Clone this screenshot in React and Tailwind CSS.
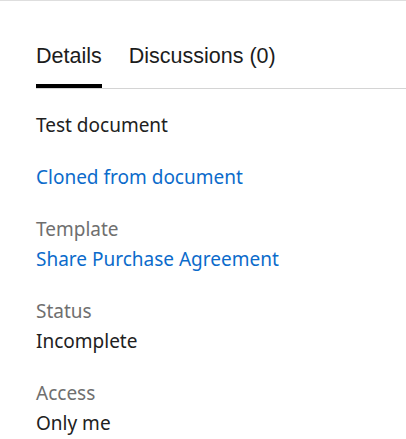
const Field = ({ label, children, link }) => (
  <div className="flex flex-col">
    {label && <span className="text-[#6f6f6f]">{label}</span>}
    <span className={link ? "text-[#0b6bcb]" : "text-[#212121]"}>{children}</span>
  </div>
);

const App = () => {
  return (
    <div className="min-h-screen bg-white border-t border-[#dedede]">
      <div className="pl-9 pt-[43px]">
        <div className="flex flex-row gap-[27px] border-b border-[#d4d4d4] font-['Liberation_Sans',Arial,sans-serif] text-[21.5px] leading-[24px]">
          <div className="pb-4 border-b-4 border-black text-[#1c1c1c]">Details</div>
          <div className="pb-5 text-[#1c1c1c]">Discussions (0)</div>
        </div>
        <div className="flex flex-col gap-[22px] pt-[21px] font-['Noto_Sans',sans-serif] text-[19px] leading-[30px]">
          <Field>Test document</Field>
          <Field link>Cloned from document</Field>
          <Field label="Template" link>
            Share Purchase Agreement
          </Field>
          <Field label="Status">Incomplete</Field>
          <Field label="Access">Only me</Field>
        </div>
      </div>
    </div>
  );
};

export default App;
